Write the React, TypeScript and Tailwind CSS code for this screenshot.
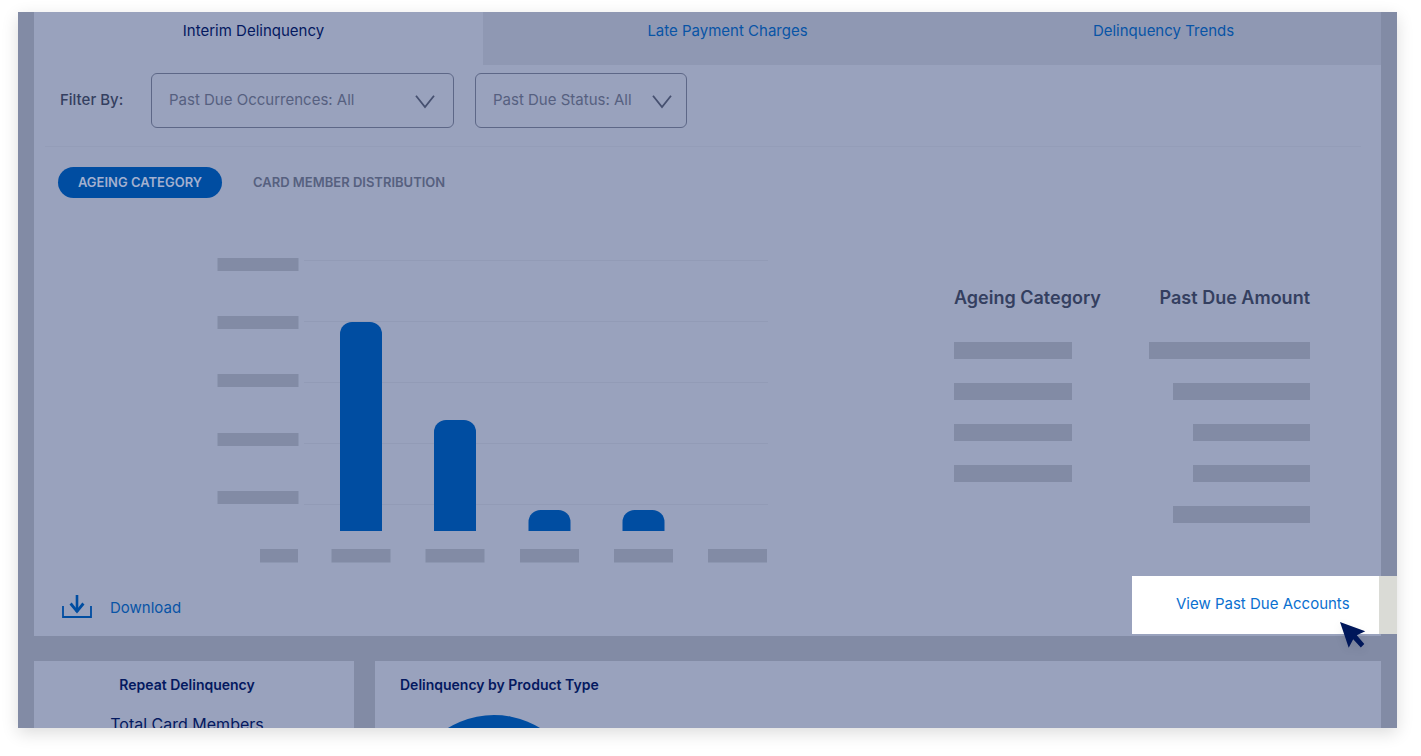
import type { ReactNode } from "react";

const tabs = [
  { label: "Interim Delinquency", style: "pr-2.5 text-[#04195f]" },
  { label: "Late Payment Charges", style: "bg-[#8f98b3] pl-10 text-[#0854a6]" },
  { label: "Delinquency Trends", style: "bg-[#8f98b3] pl-3.5 text-[#0854a6]" },
];

const bars = [
  { x: 123, top: 64 },
  { x: 217, top: 162 },
  { x: 311.5, top: 252 },
  { x: 405.5, top: 252 },
];

const rows = [
  { category: true, amount: "w-[161px]" },
  { category: true, amount: "w-[137px]" },
  { category: true, amount: "w-[117px]" },
  { category: true, amount: "w-[117px]" },
  { category: false, amount: "w-[137px]" },
];

function FilterSelect({ label, width, inset }: { label: string; width: string; inset: string }) {
  return (
    <div className={`relative ${width}`}>
      <select
        aria-label={label}
        className="h-[55px] w-full appearance-none rounded-md border border-[#5d6787] bg-transparent pl-[17px] text-[15px] text-[#566080]"
      >
        <option>{label}: All</option>
      </select>
      <svg
        className={`pointer-events-none absolute top-[22px] ${inset}`}
        width="20"
        height="14"
        viewBox="0 0 20 14"
        fill="none"
        stroke="#465070"
        strokeWidth="1.8"
        aria-hidden="true"
      >
        <path d="M1 .8l9 11.300L19 .8" />
      </svg>
    </div>
  );
}

function BarChart() {
  return (
    <svg width="551" height="305" viewBox="0 0 551 305" className="shrink-0" role="img" aria-label="Past due amount by ageing category">
      {[0, 58, 116, 175, 233].map((y) => (
        <rect key={y} x="0.5" y={y} width="81" height="13" fill="#828ba5" />
      ))}
      {[2, 63, 124, 185, 246].map((y) => (
        <rect key={y} x="87" y={y} width="464" height="1" fill="#929bb6" />
      ))}
      {bars.map(({ x, top }) => (
        <path key={x} d={`M${x} 273V${top + 12}a12 12 0 0 1 12-12h18a12 12 0 0 1 12 12V273z`} fill="#004da1" />
      ))}
      <rect x="43" y="291" width="38" height="13.5" fill="#828ba5" />
      {[114.5, 208.5, 303, 397, 491].map((x) => (
        <rect key={x} x={x} y="291" width="59" height="13.5" fill="#828ba5" />
      ))}
    </svg>
  );
}

function Panel({ className, children }: { className: string; children: ReactNode }) {
  return <section className={`bg-[#99a2bd] ${className}`}>{children}</section>;
}

export default function App() {
  return (
    <div className="flex h-screen flex-col bg-white pt-3 pr-6 pb-7 pl-[18px] font-['Inter','Liberation_Sans',sans-serif]">
      <main className="min-h-0 flex-1 overflow-hidden bg-[#828ba5] px-4 shadow-[0_5px_16px_rgba(0,0,0,0.14)]">
        <Panel className="pb-0.5">
          <nav className="grid grid-cols-3 text-[15px] leading-5">
            {tabs.map(({ label, style }) => (
              <button key={label} className={`flex h-[53px] items-start justify-center pt-[9px] ${style}`}>
                {label}
              </button>
            ))}
          </nav>

          <div className="flex items-center pt-2 pb-[18px] pl-[26px]">
            <span className="w-[91px] text-[15px] font-medium text-[#343f60]">Filter By:</span>
            <FilterSelect label="Past Due Occurrences" width="w-[303px]" inset="right-[19px]" />
            <div className="w-[21px]" />
            <FilterSelect label="Past Due Status" width="w-[212px]" inset="right-[15px]" />
          </div>

          <hr className="mr-5 ml-[11px] border-[#949db8]" />

          <div className="mt-5 flex items-center pl-6 text-[13px] font-semibold">
            <button className="h-[31px] w-[164px] rounded-full bg-[#004da1] text-[#a3b0cf]">AGEING CATEGORY</button>
            <button className="ml-[31px] text-[#56607f]">CARD MEMBER DISTRIBUTION</button>
          </div>

          <div className="mt-[60px] flex justify-between pr-[71px] pl-[183px]">
            <BarChart />
            <table className="mt-[27px] h-fit w-[356px] text-lg text-[#343f60]">
              <thead>
                <tr>
                  <th className="pb-[19px] text-left leading-[26px] font-semibold">Ageing Category</th>
                  <th className="pb-[19px] text-right leading-[26px] font-semibold">Past Due Amount</th>
                </tr>
              </thead>
              <tbody>
                {rows.map((row, i) => (
                  <tr key={i} className="h-[41px]">
                    <td>{row.category && <div className="h-[17px] w-[118px] bg-[#828ba5]" />}</td>
                    <td>
                      <div className={`ml-auto h-[17px] bg-[#828ba5] ${row.amount}`} />
                    </td>
                  </tr>
                ))}
              </tbody>
            </table>
          </div>

          <div className="mt-[13px] flex items-center justify-between pl-7">
            <a href="#download" className="flex items-center gap-[18px] pt-1.5 text-[15px] text-[#0854a6]">
              <svg width="30" height="26" viewBox="0 0 30 26" fill="none" stroke="#004da1" aria-hidden="true">
                <path d="M1 11v11h28V11" strokeWidth="1.800" />
                <path d="M15 0v17" strokeWidth="2.600" />
                <path d="M8.600 8.500L15 16.400l6.400-7.900" strokeWidth="2.800" />
              </svg>
              Download
            </a>
            <div className="relative -mr-4 flex h-[58px] w-[265px] items-center border-r-[18px] border-[#dadbd6] bg-white pb-0.5 pl-11">
              <a href="#past-due-accounts" className="text-[15px] whitespace-nowrap text-[#0a70d0]">
                View Past Due Accounts
              </a>
              <svg
                className="absolute top-[46px] right-[13px] overflow-visible drop-shadow-[0_3px_4px_rgba(0,0,0,0.08)]"
                width="26"
                height="26"
                viewBox="0 0 26 26"
                aria-hidden="true"
              >
                <path d="M0 0l25.300 9.300-8.500 4 7.500 8.700-3.500 3.400-7.600-8.100-4.500 8.400z" fill="#00175a" />
              </svg>
            </div>
          </div>
        </Panel>

        <div className="mt-[25px] flex gap-[21px] text-sm text-[#04195f]">
          <Panel className="w-80 shrink-0 pt-3.5 pr-3.5 text-center">
            <h2 className="leading-5 font-semibold">Repeat Delinquency</h2>
            <p className="mt-[17px] text-base">Total Card Members</p>
          </Panel>
          <Panel className="flex-1 pt-3.5 pl-[25px]">
            <h2 className="leading-5 font-semibold">Delinquency by Product Type</h2>
            <svg className="mt-5 ml-1.5" width="176" height="176" viewBox="0 0 176 176" aria-hidden="true">
              <circle cx="88" cy="88" r="88" fill="#004da1" />
            </svg>
          </Panel>
        </div>
      </main>
    </div>
  );
}
